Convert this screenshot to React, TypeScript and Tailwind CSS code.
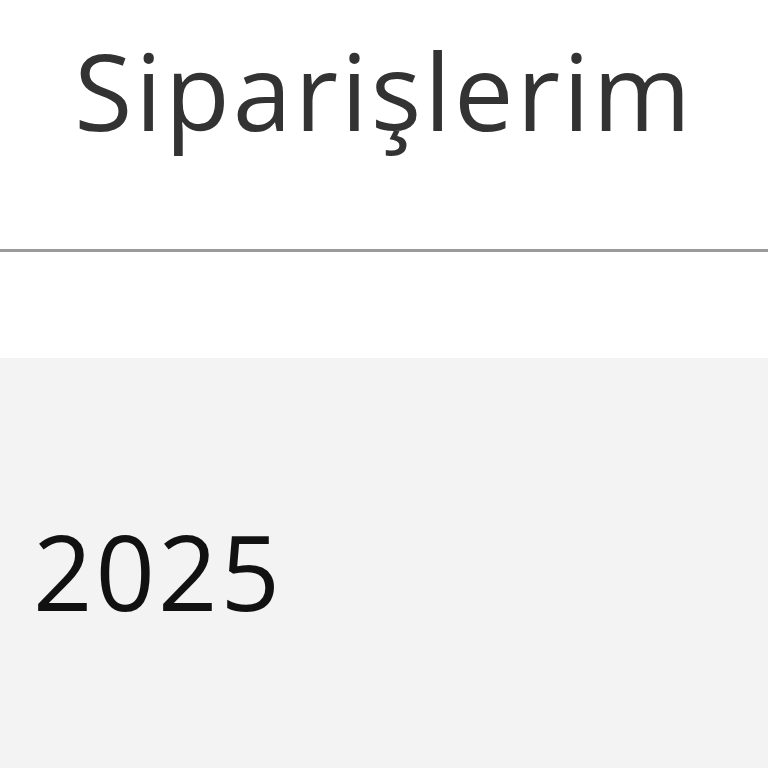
export default function App() {
  return (
    <div className="h-[768px] w-[768px] overflow-hidden bg-white font-['Open_Sans',sans-serif]">
      <header className="flex h-[252px] items-start justify-center border-b-[3px] border-[#9a9a9a] pt-[22px]">
        <h1 className="text-[106px] leading-[1.3] font-normal tracking-[3px] text-[#333333]">
          Siparişlerim
        </h1>
      </header>
      <div className="h-[106px] bg-white" />
      <section className="h-[410px] bg-[#f3f3f3] px-[33px] pt-[145px]">
        <p className="text-[104px] leading-[1.3] font-normal tracking-[3px] text-[#111111]">2025</p>
      </section>
    </div>
  );
}
